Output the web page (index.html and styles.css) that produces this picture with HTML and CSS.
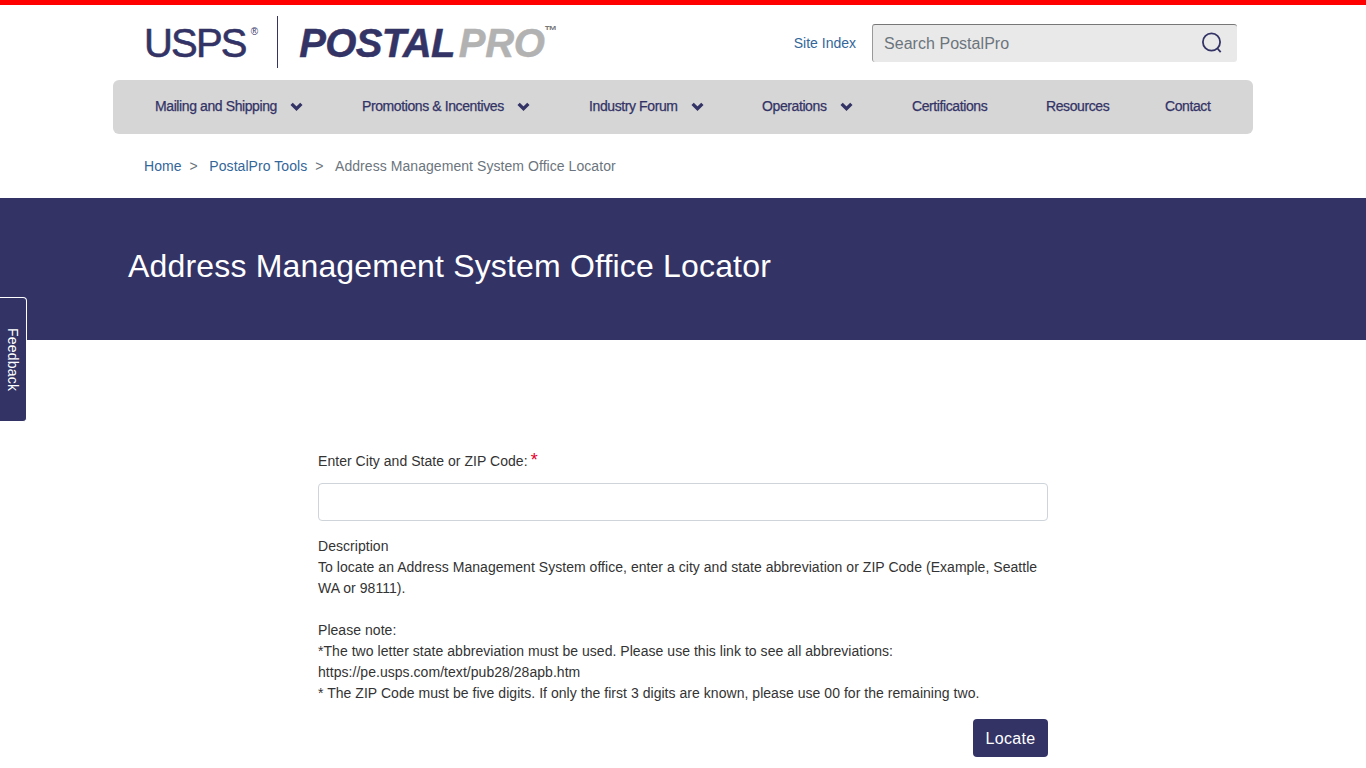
FILE: index.html
```html
<!DOCTYPE html>
<html lang="en">
<head>
    <meta charset="UTF-8">
    <meta name="viewport" content="width=device-width, initial-scale=1.0">
    <title>Address Management System Office Locator</title>
    <link rel="stylesheet" href="styles.css">
</head>
<body>
    <header class="top-header">
        <div class="logo">
            <span class="logo-usps">USPS</span><span class="logo-reg">®</span>
            <span class="logo-divider"></span>
            <span class="logo-postal">POSTAL</span><span class="logo-pro">PRO</span><span class="logo-tm">™</span>
        </div>
        <div class="header-tools">
            <a class="site-index" href="#">Site Index</a>
            <div class="search-box">
                <span class="search-text">Search PostalPro</span>
                <svg class="search-icon" width="22" height="22" viewBox="0 0 22 22" fill="none" stroke="#333366" stroke-width="1.8">
                    <circle cx="10.5" cy="10" r="8.6"/>
                    <path d="M16.5 16.5l3.2 3.6"/>
                </svg>
            </div>
        </div>
    </header>

    <nav class="main-nav">
        <a class="nav-mailing" href="#">Mailing and Shipping <svg class="chevron" viewBox="0 0 12 8"><path d="M1.500 1.500L6 6l4.500-4.500"/></svg></a>
        <a class="nav-promo" href="#">Promotions &amp; Incentives <svg class="chevron" viewBox="0 0 12 8"><path d="M1.500 1.500L6 6l4.500-4.500"/></svg></a>
        <a class="nav-forum" href="#">Industry Forum <svg class="chevron" viewBox="0 0 12 8"><path d="M1.500 1.500L6 6l4.500-4.500"/></svg></a>
        <a class="nav-ops" href="#">Operations <svg class="chevron" viewBox="0 0 12 8"><path d="M1.500 1.500L6 6l4.500-4.500"/></svg></a>
        <a class="nav-cert" href="#">Certifications</a>
        <a class="nav-res" href="#">Resources</a>
        <a class="nav-contact" href="#">Contact</a>
    </nav>

    <div class="breadcrumb">
        <a href="#">Home</a><span class="sep">&gt;</span>
        <a href="#">PostalPro Tools</a><span class="sep">&gt;</span>
        <span class="current">Address Management System Office Locator</span>
    </div>

    <section class="banner">
        <h1>Address Management System Office Locator</h1>
    </section>

    <a class="feedback-tab" href="#"><span>Feedback</span></a>

    <main class="locator-form">
        <label class="field-label" for="cityState">Enter City and State or ZIP Code:<span class="required">*</span></label>
        <input class="field-input" type="text" id="cityState">
        <div class="description">
            <p>Description<br>To locate an Address Management System office, enter a city and state abbreviation or ZIP Code (Example, Seattle WA or 98111).</p>
            <p>Please note:<br>*The two letter state abbreviation must be used. Please use this link to see all abbreviations: https://pe.usps.com/text/pub28/28apb.htm<br>* The ZIP Code must be five digits. If only the first 3 digits are known, please use 00 for the remaining two.</p>
        </div>
        <div class="form-actions">
            <button class="locate-button" type="button">Locate</button>
        </div>
    </main>
</body>
</html>
```

FILE: styles.css
```css
* {
    box-sizing: border-box;
}

body {
    margin: 0;
    font-family: "Liberation Sans", Arial, sans-serif;
    font-size: 14px;
    letter-spacing: 0.04px;
    color: #333;
    background-color: #fff;
    border-top: 5px solid #f00;
    overflow-x: hidden;
}

a {
    text-decoration: none;
}

.top-header {
    display: flex;
    justify-content: space-between;
    align-items: center;
    height: 75px;
    padding: 0 129px 0 144px;
}

.logo {
    display: flex;
    align-items: flex-start;
    height: 52px;
    margin-top: -1px;
    white-space: nowrap;
}

.logo-usps {
    margin-top: 5px;
    font-size: 40px;
    line-height: 44px;
    color: #333366;
    letter-spacing: -1.8px;
    -webkit-text-stroke: 0.6px #333366;
}

.logo-reg {
    margin: 10px 0 0 5px;
    font-size: 10px;
    line-height: 12px;
    color: #333366;
}

.logo-divider {
    width: 1px;
    height: 52px;
    margin: 0 21px 0 19px;
    background-color: #333366;
}

.logo-postal,
.logo-pro {
    margin-top: 5px;
    font-size: 40px;
    line-height: 44px;
    font-weight: bold;
    font-style: italic;
    letter-spacing: -0.6px;
    color: #333366;
    -webkit-text-stroke: 0.5px #333366;
}

.logo-pro {
    margin-left: 4px;
    letter-spacing: -0.3px;
    color: #b2b2b2;
    -webkit-text-stroke: 0.5px #b2b2b2;
}

.logo-tm {
    margin: 9px 0 0 0;
    font-size: 13px;
    line-height: 12px;
    font-weight: bold;
    color: #777;
}

.header-tools {
    display: flex;
    align-items: center;
}

.site-index {
    margin-top: 1px;
    margin-right: 16px;
    font-size: 14px;
    letter-spacing: 0;
    color: #336699;
}

.search-box {
    display: flex;
    justify-content: space-between;
    align-items: center;
    width: 365px;
    height: 38px;
    padding: 0 14px 0 11px;
    background-color: #e9e9e9;
    border-radius: 3px;
    border-top: 1px solid #777;
    border-left: 1px solid #999;
}

.search-text {
    margin-top: 1px;
    font-size: 16px;
    color: #6c757d;
}

.main-nav {
    position: relative;
    height: 54px;
    margin: 0 113px;
    background-color: #d6d6d6;
    border-radius: 6px;
}

.main-nav a {
    position: absolute;
    top: 0;
    display: flex;
    align-items: center;
    height: 52px;
    font-size: 14px;
    letter-spacing: -0.4px;
    color: #333366;
    -webkit-text-stroke: 0.25px #333366;
    white-space: pre;
}

.nav-mailing { left: 42px; }
.nav-promo { left: 249px; }
.nav-forum { left: 476px; }
.nav-ops { left: 649px; }
.nav-cert { left: 799px; }
.nav-res { left: 933px; }
.nav-contact { left: 1052px; }

.chevron {
    width: 13px;
    height: 9px;
    margin-top: 1px;
    margin-left: 10px;
    fill: none;
    stroke: #333366;
    stroke-width: 3;
}

.breadcrumb {
    display: flex;
    align-items: center;
    height: 64px;
    padding-left: 144px;
    font-size: 14px;
    letter-spacing: 0.06px;
}

.breadcrumb a {
    color: #336699;
}

.breadcrumb .sep {
    margin: 0 11.500px 0 8px;
    color: #6c757d;
}

.breadcrumb .current {
    color: #6c757d;
}

.banner {
    height: 142px;
    padding-left: 128px;
    background-color: #333366;
}

.banner h1 {
    margin: 0;
    font-size: 32px;
    line-height: 136px;
    font-weight: normal;
    letter-spacing: 0.17px;
    color: #fff;
}

.feedback-tab {
    position: absolute;
    top: 297px;
    left: 0;
    display: flex;
    justify-content: center;
    align-items: center;
    width: 27px;
    height: 125px;
    background-color: #333366;
    border: 1px solid #fff;
    border-left: none;
    border-radius: 0 4px 4px 0;
    color: #fff;
    font-size: 14px;
    letter-spacing: 0.2px;
}

.feedback-tab span {
    writing-mode: vertical-rl;
}

.locator-form {
    width: 730px;
    margin: 0 auto;
    padding-top: 111px;
}

.field-label {
    display: block;
    height: 32px;
    font-size: 14px;
    line-height: 18px;
    color: #333;
}

.required {
    margin-left: 3px;
    font-size: 18px;
    color: #e4002b;
}

.field-input {
    display: block;
    width: 100%;
    height: 38px;
    border: 1px solid #ced4da;
    border-radius: 4px;
    background-color: #fff;
}

.description {
    margin-top: 15px;
    font-size: 14px;
    line-height: 21px;
    color: #333;
}

.description p {
    margin: 0 0 21px;
}

.form-actions {
    display: flex;
    justify-content: flex-end;
    margin-top: -6px;
}

.locate-button {
    width: 75px;
    height: 38px;
    padding: 1px 0 0;
    border: none;
    border-radius: 4px;
    background-color: #333366;
    color: #fff;
    font-family: inherit;
    font-size: 16px;
    letter-spacing: 0.3px;
}
```
